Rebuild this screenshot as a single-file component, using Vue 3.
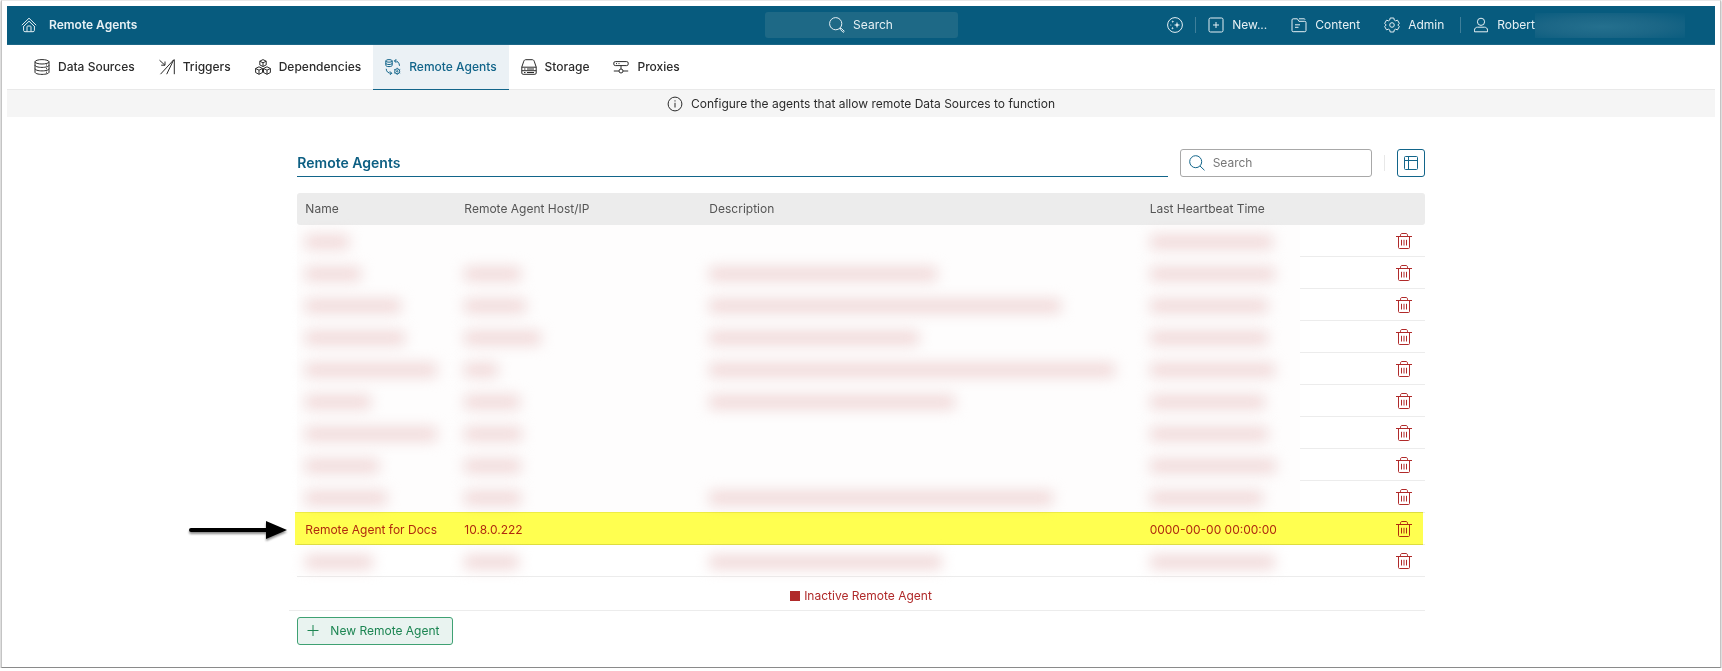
<script setup>
const rows = [
  { name: 44, host: 0, desc: 0, time: 123 },
  { name: 56, host: 57, desc: 228, time: 125 },
  { name: 96, host: 62, desc: 352, time: 118 },
  { name: 100, host: 77, desc: 210, time: 118 },
  { name: 132, host: 34, desc: 406, time: 125 },
  { name: 66, host: 56, desc: 246, time: 115 },
  { name: 132, host: 58, desc: 0, time: 118 },
  { name: 74, host: 57, desc: 0, time: 126 },
  { name: 82, host: 57, desc: 344, time: 113 },
  { text: ['Remote Agent for Docs', '10.8.0.222', '', '0000-00-00 00:00:00'] },
  { name: 68, host: 55, desc: 233, time: 125, last: true },
]
const fields = ['name', 'host', 'desc', 'time']
</script>

<template>
  <div class="frame">
    <header class="topbar">
      <div class="brand">
        <a href="#" class="plain" aria-label="Home">
          <svg class="ico" viewBox="0 0 16 16">
            <path d="M.8 8.200 8 1.200l7.200 7M2.800 9.200 8 4.200l5.200 5M2.600 9v4.400c0 .8.5 1.300 1.300 1.300h8.200c.8 0 1.300-.5 1.300-1.300V9M6 14.500V9.800c0-.5.3-.8.8-.8h2.400c.5 0 .8.3.8.8v4.700" />
          </svg>
        </a>
        <span class="brand-name">Remote Agents</span>
      </div>
      <button type="button" class="global-search">
        <svg class="ico" viewBox="0 0 16 16">
          <circle cx="6.700" cy="6.700" r="6.100" />
          <path d="m11 11 1.200 1.200M12.300 11.400l3 2.900-1.100 1.100-2.900-3z" />
        </svg>
        <span>Search</span>
      </button>
      <div class="tools">
        <button type="button" class="tool" aria-label="Assistant">
          <svg class="ico" viewBox="0 0 16 16">
            <circle cx="8" cy="8" r="7.400" />
            <path class="fill" d="m10 4.700.8 2.500 2.500.8-2.500.8-.8 2.500-.8-2.500L6.700 8l2.500-.8zM5.800 3.200l.4 1.100 1.100.4-1.100.4-.4 1.100-.4-1.100-1.100-.4 1.100-.4zM5.500 9.700l.4 1.100 1.100.4-1.100.4-.4 1.100-.4-1.100-1.100-.4 1.100-.4z" />
            <circle class="fill" cx="3.800" cy="8" r=".6" />
          </svg>
        </button>
        <span class="rule"></span>
        <button type="button" class="tool">
          <svg class="ico" viewBox="0 0 16 16">
            <rect x="1" y="1" width="14" height="14" rx="1.500" />
            <path d="M8 5v6M5 8h6" />
          </svg>
          <span>New...</span>
        </button>
        <button type="button" class="tool">
          <svg class="ico" viewBox="0 0 16 16">
            <path d="M1 3c0-.8.4-1.200 1.200-1.200h4.200l1.500 2.500h5.900c.8 0 1.200.4 1.200 1.200v8c0 .8-.4 1.200-1.200 1.200H2.200c-.8 0-1.200-.4-1.200-1.200zM8 1.800h5.200c.5 0 .8.3.8.8M4 7.800h5M4 10.300h3.500" />
          </svg>
          <span>Content</span>
        </button>
        <button type="button" class="tool">
          <svg class="ico" viewBox="0 0 16 16">
            <path d="M6.200 1h3.600l.5 2.100 1.200.7 2-.6 1.800 3.200L13.800 8l1.500 1.600-1.800 3.200-2-.6-1.200.7-.5 2.100H6.200l-.5-2.100-1.200-.7-2 .6L.7 9.600 2.200 8 .7 6.400l1.800-3.200 2 .6 1.200-.7z" />
            <circle cx="8" cy="8" r="2.300" />
          </svg>
          <span>Admin</span>
        </button>
        <span class="rule wide"></span>
        <button type="button" class="tool">
          <svg class="ico" viewBox="0 0 16 16">
            <circle cx="8" cy="4.800" r="3.600" />
            <path d="M1.500 14.800v-1.600c0-1.900 1.300-3 3-3h7c1.700 0 3 1.100 3 3v1.600z" />
          </svg>
          <span>Robert</span>
        </button>
        <span class="surname" aria-hidden="true"></span>
      </div>
    </header>

    <nav class="tabs">
      <a href="#" class="tab">
        <svg class="ico" viewBox="0 0 16 16">
          <ellipse cx="8" cy="2.800" rx="7" ry="2.200" />
          <path d="M1 2.800v10.400c0 1.200 3 2.200 7 2.200s7-1 7-2.200V2.800M1 6.200c0 1.200 3 2.200 7 2.200s7-1 7-2.200M1 9.700c0 1.200 3 2.200 7 2.200s7-1 7-2.200M12 6h1M12 9.700h1M12 13.200h1" />
        </svg>
        <span>Data Sources</span>
      </a>
      <a href="#" class="tab">
        <svg class="ico" viewBox="0 0 16 16">
          <path d="m.5 1.200 5.300 4.900M6 2.500v3.700H2.200M1.500 15.200 14.700.8M7.700 15.200l7-14.400M15.300.5v14.700" />
        </svg>
        <span>Triggers</span>
      </a>
      <a href="#" class="tab">
        <svg class="ico" viewBox="0 0 16 16">
          <path d="m8 .6 3.200 1.600v3.700L8 7.500 4.800 5.900V2.200zM4.800 2.200 8 3.800l3.200-1.600M8 3.800v3.700M4 7.800l3.500 1.700v4L4 15.300.6 13.500v-4zM.6 9.500 4 11.200l3.500-1.700M4 11.200v4.100M12 7.800l3.400 1.700v4L12 15.300l-3.500-1.800v-4zM8.500 9.500l3.500 1.700 3.400-1.700M12 11.200v4.100" />
        </svg>
        <span>Dependencies</span>
      </a>
      <a href="#" class="tab active" aria-current="page">
        <svg class="ico" viewBox="0 0 16 16">
          <ellipse cx="4" cy="1.900" rx="3.200" ry="1.300" />
          <path d="M.8 1.900v4.400c0 .8 1.300 1.300 3.200 1.300s3.200-.5 3.200-1.300V1.900M.8 4.200c0 .8 1.300 1.300 3.200 1.300s3.200-.5 3.200-1.300M9.500 1.800c3 0 4.800 1.800 5 5M11.500.2 9.400 1.800l1.800 2M1.200 9.800c.2 3 2 4.500 5.300 4.500M4.800 12.300l2 2-2 1.500" />
          <circle cx="12.200" cy="12.300" r="2.500" />
          <circle cx="12.200" cy="12.300" r=".7" />
          <path d="M12.200 8.800v1M12.200 14.800v1M9.200 10.500l.9.600M14.300 13.500l.9.600M9.200 14.100l.9-.6M14.300 11.100l.9-.6" />
        </svg>
        <span>Remote Agents</span>
      </a>
      <a href="#" class="tab">
        <svg class="ico" viewBox="0 0 16 16">
          <path d="m.8 8 2-5.800C3.200 1.200 3.800.7 4.800.7h6.400c1 0 1.600.5 2 1.500L15.200 8v6c0 .8-.5 1.300-1.300 1.300H2.100c-.8 0-1.300-.5-1.300-1.300zM.8 8.200h14.400M.8 11.700h14.400M3 10h1.500M6 10h7M3 13.500h1.500M6 13.500h7" />
        </svg>
        <span>Storage</span>
      </a>
      <a href="#" class="tab">
        <svg class="ico" viewBox="0 0 16 16">
          <rect x=".8" y="2.600" width="14.400" height="4" rx="1.500" />
          <path d="M3 4.600h1M5.500 4.600h1M8 6.600V10M.8 12h5.200M10 12h5.200" />
          <circle cx="8" cy="12" r="2" />
        </svg>
        <span>Proxies</span>
      </a>
    </nav>

    <p class="hint">
      <svg class="ico" viewBox="0 0 16 16">
        <circle cx="8" cy="8" r="6.900" />
        <path d="M8 6.800v4.700M8 4.300v1.200" />
      </svg>
      <span>Configure the agents that allow remote Data Sources to function</span>
    </p>

    <main class="content">
      <div class="heading">
        <h1>Remote Agents</h1>
        <label class="filter">
          <svg class="ico" viewBox="0 0 16 16">
            <circle cx="6.700" cy="6.700" r="6" />
            <path d="m11 11 4.500 4.300" />
          </svg>
          <input type="search" placeholder="Search" aria-label="Search agents" />
        </label>
        <span class="split"></span>
        <button type="button" class="columns" aria-label="Columns">
          <svg class="ico" viewBox="0 0 16 16">
            <rect x="1.500" y="1.500" width="13" height="13" rx="1" />
            <path d="M1.500 5.500h13M5.500 1.500v13" />
          </svg>
        </button>
      </div>

      <table class="grid">
        <colgroup>
          <col class="c-name" /><col class="c-host" /><col /><col class="c-time" /><col class="c-actions" />
        </colgroup>
        <thead>
          <tr>
            <th>Name</th>
            <th>Remote Agent Host/IP</th>
            <th>Description</th>
            <th>Last Heartbeat Time</th>
            <th></th>
          </tr>
        </thead>
        <tbody>
          <tr v-for="(row, i) in rows" :key="i" :class="{ marked: row.text, last: row.last }">
            <td v-for="(field, c) in fields" :key="field">
              <template v-if="row.text">{{ row.text[c] }}</template>
              <span v-else-if="row[field]" class="smudge" :style="{ width: row[field] + 'px' }" aria-hidden="true"></span>
            </td>
            <td class="actions">
              <button type="button" class="trash" aria-label="Delete agent">
                <svg class="ico" viewBox="0 0 16 16">
                  <path d="M0 3.500h16M4.500 3.500V2.200C4.500 1.200 5 .5 6 .5h4c1 0 1.500.7 1.500 1.700v1.300M2.500 3.500v11c0 .6.400 1 1 1h9c.6 0 1-.4 1-1v-11M5.500 6.800v5.700M8 6.800v5.700M10.500 6.800v5.700" />
                </svg>
              </button>
              <template v-if="row.text">
                <span class="highlight"></span>
                <svg class="arrow" viewBox="0 0 100 24">
                  <path class="shaft" d="M3 12h76" />
                  <path class="head" d="m78 3 21 9-21 9z" />
                </svg>
              </template>
            </td>
          </tr>
        </tbody>
      </table>

      <div class="legend"><span class="swatch"></span>Inactive Remote Agent</div>

      <button type="button" class="create">
        <svg class="ico" viewBox="0 0 16 16"><path d="M2.500 7.500h11M8 2v11" /></svg>
        <span>New Remote Agent</span>
      </button>
    </main>
  </div>
</template>

<style>
body {
  margin: 0;
  background: #fff;
}
</style>

<style scoped>
.frame {
  box-sizing: border-box;
  min-height: calc(100vh - 3px);
  margin: 0 1px;
  padding: 5px;
  border: 1px solid #c4c4c4;
  border-top-color: #e8e8e8;
  border-bottom-color: #8a8a8a;
  box-shadow: 0 1px 2px rgba(0, 0, 0, 0.4);
  font-family: Inter, "Liberation Sans", sans-serif;
  font-size: 12px;
  line-height: 16px;
  color: #2b2b2b;
  background: #fff;
}
button {
  font: inherit;
  color: inherit;
  background: none;
  border: 0;
  padding: 0;
  cursor: pointer;
}
a {
  color: inherit;
  text-decoration: none;
}
.ico {
  display: block;
  flex: none;
  width: 16px;
  height: 16px;
  fill: none;
  stroke: currentColor;
  stroke-width: 1;
}
.ico .fill {
  fill: currentColor;
  stroke: none;
}
.topbar {
  display: grid;
  grid-template-columns: 1fr 193px 1fr;
  align-items: center;
  box-sizing: border-box;
  height: 39px;
  color: #e6f0f4;
  background: #075b7e;
  border-bottom: 1px solid #1c6787;
}
.brand {
  display: flex;
  align-items: center;
  gap: 12px;
  padding-left: 14px;
}
.brand-name {
  font-weight: 600;
}
.global-search {
  display: flex;
  align-items: center;
  justify-content: center;
  gap: 8px;
  height: 26px;
  border-radius: 3px;
  background: #1e6986;
}
.tools {
  display: flex;
  align-items: center;
  justify-content: flex-end;
  padding-right: 30px;
}
.tool {
  display: flex;
  align-items: center;
  gap: 8px;
  padding: 0 12px;
}
.tool + .surname {
  margin-left: -12px;
}
.rule {
  width: 1px;
  height: 16px;
  background: #3f7f9a;
}
.rule.wide {
  margin-left: 4px;
}
.surname {
  width: 150px;
  height: 25px;
  background: radial-gradient(ellipse at 45% 55%, #25708e 0, #1b6686 50%, #075b7e 100%);
}
.tabs {
  display: flex;
  height: 44px;
  padding-left: 15px;
  border-bottom: 1px solid #e9e9e9;
}
.tab {
  display: flex;
  align-items: center;
  gap: 8px;
  height: 44px;
  padding: 0 12px;
  font-weight: 500;
  border-bottom: 1px solid transparent;
}
.tab.active {
  color: #12658a;
  background: #ebf1f5;
  border-bottom-color: #12658a;
}
.hint {
  display: flex;
  align-items: center;
  justify-content: center;
  gap: 8px;
  height: 27px;
  margin: 0;
  background: #f5f5f5;
}
.content {
  width: 66%;
  margin: 0 auto;
  padding: 32px 0 17px;
}
.heading {
  display: flex;
  height: 28px;
  margin-bottom: 16px;
  color: #12658a;
}
h1 {
  flex: 1;
  margin: 0 12px 0 0;
  font-size: 14px;
  line-height: 27px;
  font-weight: 600;
  color: #0d5f83;
  border-bottom: 1px solid #12658a;
}
.filter {
  display: flex;
  align-items: center;
  gap: 8px;
  box-sizing: border-box;
  width: 192px;
  padding: 0 8px;
  border: 1px solid #a8a8a8;
  border-radius: 3px;
}
.filter input {
  flex: 1;
  min-width: 0;
  padding: 0;
  border: 0;
  outline: 0;
  font: inherit;
  background: none;
}
.filter input::placeholder {
  color: #777;
}
.split {
  width: 1px;
  height: 16px;
  margin: 6px 12px;
  background: #e8e8e8;
}
.columns {
  display: flex;
  align-items: center;
  justify-content: center;
  box-sizing: border-box;
  width: 28px;
  border: 1px solid #12658a;
  border-radius: 3px;
}
.grid {
  width: 100%;
  table-layout: fixed;
  border-collapse: separate;
  border-spacing: 0;
}
.c-name {
  width: 159px;
}
.c-host {
  width: 245px;
}
.c-time {
  width: 158px;
}
.c-actions {
  width: 125px;
}
th,
td {
  box-sizing: border-box;
  height: 32px;
  padding: 0 8px;
  text-align: left;
  white-space: nowrap;
}
th {
  font-weight: 400;
  color: #555;
  background: #ececec;
}
th:first-child {
  border-radius: 3px 0 0 3px;
}
th:last-child {
  border-radius: 0 3px 3px 0;
}
td {
  color: #b02a2a;
  border-bottom: 1px solid transparent;
  background-color: #fefdfd;
}
.actions,
.last td,
.marked td {
  border-bottom-color: #ececec;
  background: none;
}
.marked td {
  padding-top: 2px;
}
td.actions {
  padding: 0 13px 0 0;
}
.trash {
  display: block;
  margin-left: auto;
}
.smudge {
  display: block;
  height: 14px;
  margin-top: 2px;
  border-radius: 4px;
  background: #f0d8d8;
  filter: blur(7px);
}
.marked {
  position: relative;
}
.highlight {
  position: absolute;
  inset: -1px 2px 0 -2px;
  box-sizing: border-box;
  border: solid #efef45;
  border-width: 1px 0;
  background: #ffff50;
  mix-blend-mode: multiply;
  pointer-events: none;
}
.arrow {
  position: absolute;
  right: 100%;
  top: 5px;
  width: 100px;
  height: 24px;
  margin-right: 9px;
  overflow: visible;
  filter: drop-shadow(0 2px 1px rgba(0, 0, 0, 0.45));
}
.shaft {
  stroke: #000;
  stroke-width: 4;
  stroke-linecap: round;
}
.head {
  fill: #000;
}
.legend {
  display: flex;
  align-items: center;
  justify-content: center;
  gap: 4px;
  box-sizing: border-box;
  height: 34px;
  margin-left: -8px;
  padding: 5px 0 0 8px;
  color: #b02a2a;
  border-bottom: 1px solid #ececec;
}
.swatch {
  width: 10px;
  height: 10px;
  background: #b02a2a;
}
.create {
  display: flex;
  align-items: center;
  gap: 9px;
  box-sizing: border-box;
  height: 28px;
  margin-top: 6px;
  padding: 0 13px 0 7px;
  color: #1c8552;
  background: #e9f3f0;
  border: 1px solid #3fa173;
  border-radius: 3px;
}
</style>
